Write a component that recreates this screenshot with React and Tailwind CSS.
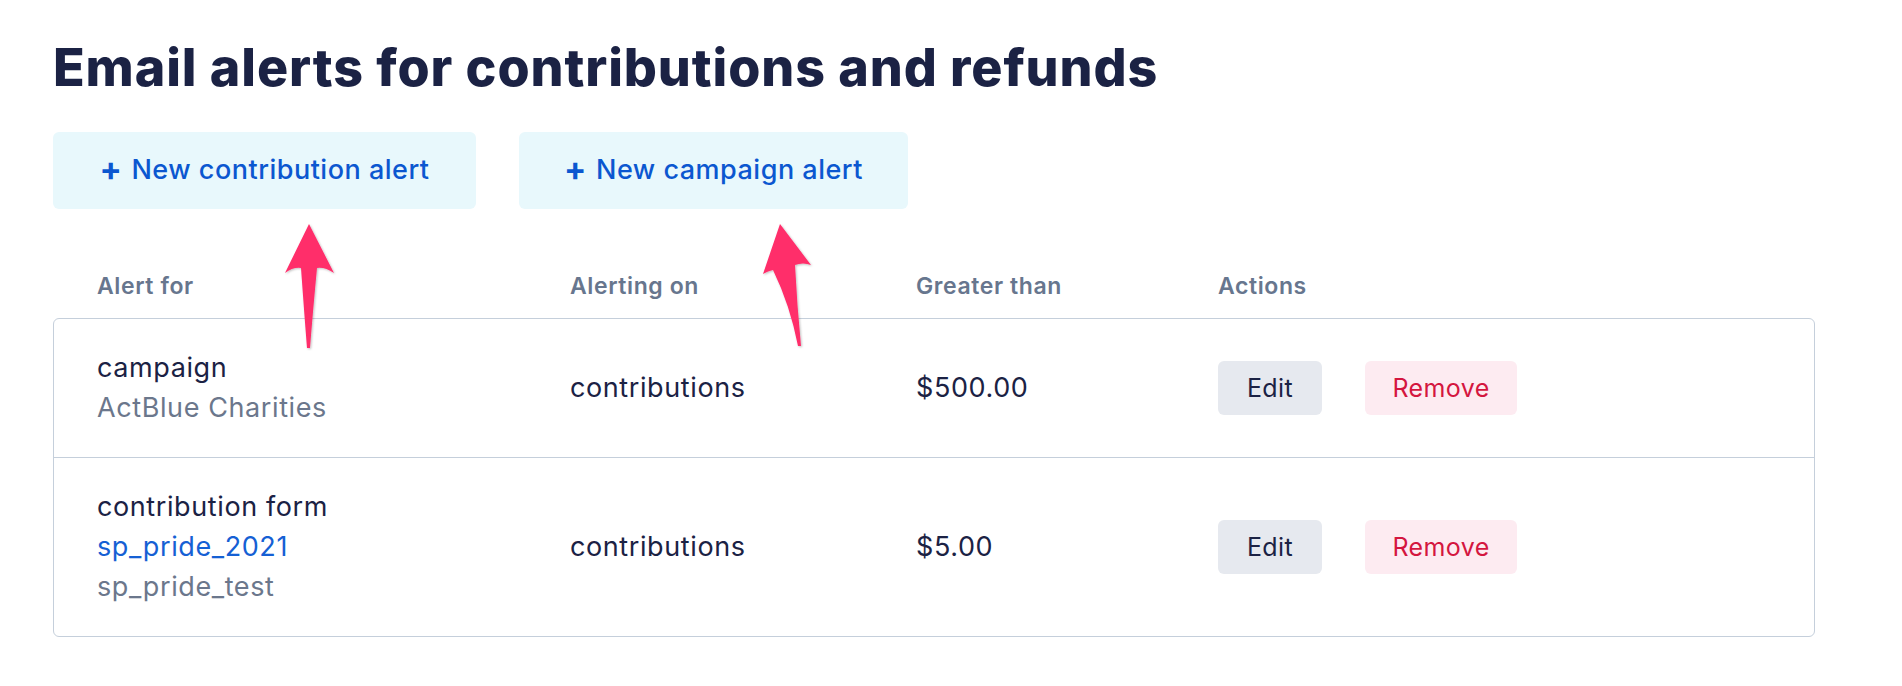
import React from "react";

const rows = [
  {
    lines: [
      { t: "campaign", c: "text-[#1b2244]" },
      { t: "ActBlue Charities", c: "text-[#6b778c]" },
    ],
    on: "contributions",
    amount: "$500.00",
  },
  {
    lines: [
      { t: "contribution form", c: "text-[#1b2244]" },
      { t: "sp_pride_2021", c: "text-[#1560d4]" },
      { t: "sp_pride_test", c: "text-[#6b778c]" },
    ],
    on: "contributions",
    amount: "$5.00",
  },
];

export default function App() {
  return (
    <div
      className="relative min-h-[686px] w-[1902px] bg-white pl-[53px] pr-[87px] pt-[42px]"
      style={{ fontFamily: "Inter, 'Noto Sans', sans-serif" }}
    >
      <h1 className="text-[52px] font-extrabold leading-none tracking-[0.9px] text-[#1b2244]">
        Email alerts for contributions and refunds
      </h1>

      <div className="mt-[38px] flex gap-[43px]">
        <button className="flex h-[77px] w-[423px] items-center justify-center rounded-[6px] bg-[#e8f8fc] text-[27px] font-medium tracking-[0.5px] text-[#0b57d0]">
          <span className="mr-[9px] -mt-[3px] text-[33px] font-bold leading-none">+</span>New contribution alert
        </button>
        <button className="flex h-[77px] w-[389px] items-center justify-center rounded-[6px] bg-[#e8f8fc] text-[27px] font-medium tracking-[0.5px] text-[#0b57d0]">
          <span className="mr-[9px] -mt-[3px] text-[33px] font-bold leading-none">+</span>New campaign alert
        </button>
      </div>

      <div className="mt-[63px] mb-[18px] grid grid-cols-[473px_346px_302px_1fr] pl-[44px] text-[23px] font-semibold leading-[28px] tracking-[0.6px] text-[#67768e]">
        <div>Alert for</div>
        <div>Alerting on</div>
        <div>Greater than</div>
        <div>Actions</div>
      </div>

      <div className="rounded-[6px] border border-[#c5cfdb]">
        {rows.map((r, i) => (
          <div
            key={i}
            className={`grid grid-cols-[473px_346px_302px_1fr] items-center py-[29px] pl-[43px] text-[27px] leading-[40px] tracking-[0.6px] text-[#1b2244] ${
              i > 0 ? "border-t border-[#c5cfdb]" : ""
            }`}
          >
            <div className="flex flex-col">
              {r.lines.map((l, j) => (
                <span key={j} className={l.c}>
                  {l.t}
                </span>
              ))}
            </div>
            <div>{r.on}</div>
            <div>{r.amount}</div>
            <div className="flex gap-[43px]">
              <button className="flex h-[54px] w-[104px] items-center justify-center rounded-[6px] bg-[#e6e9ef] text-[25px] tracking-[0.4px] text-[#1b2244]">
                Edit
              </button>
              <button className="flex h-[54px] w-[152px] items-center justify-center rounded-[6px] bg-[#fdebf1] text-[25px] tracking-[0.4px] text-[#d4163f]">
                Remove
              </button>
            </div>
          </div>
        ))}
      </div>

      <svg
        className="pointer-events-none absolute left-0 top-0"
        width="1902"
        height="686"
        viewBox="0 0 1902 686"
      >
        <defs>
          <filter id="sh" x="-50%" y="-50%" width="200%" height="200%">
            <feDropShadow dx="1" dy="1" stdDeviation="1.2" floodColor="#000" floodOpacity="0.25" />
          </filter>
        </defs>
        <path
          d="M309,224 L334,273 Q325,267 317,268 Q313,310 310,348 L307,348 Q304,310 301,268 Q293,267 285,273 Z"
          fill="#ff2d6b"
          filter="url(#sh)"
        />
        <path
          d="M780,224 L811,265 Q803,262 795,265 Q797,305 801,346 L798,346 Q790,305 773,270 Q768,271 763,274 Z"
          fill="#ff2d6b"
          filter="url(#sh)"
        />
      </svg>
    </div>
  );
}
